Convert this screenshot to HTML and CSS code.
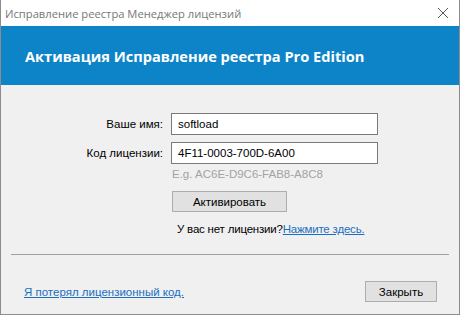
FILE: index.html
```html
<!doctype html>
<html lang="ru">
  <head>
    <meta charset="UTF-8" />
    <title>Исправление реестра Менеджер лицензий</title>
    <link rel="stylesheet" href="styles.css">
  </head>
  <body>
    <div class="window">
      <div class="titlebar">
        <span class="title">Исправление реестра Менеджер лицензий</span>
        <svg class="close" width="12" height="12" viewBox="0 0 12 12">
          <path d="M1 1 L11 11 M11 1 L1 11" stroke="#555" stroke-width="1" fill="none" />
        </svg>
      </div>
      <div class="banner">Активация Исправление реестра Pro Edition</div>
      <div class="content">
        <div class="form">
          <label class="label">Ваше имя:</label>
          <div class="input">softload</div>
          <label class="label">Код лицензии:</label>
          <div class="input">4F11-0003-700D-6A00</div>
          <div class="hint">E.g. AC6E-D9C6-FAB8-A8C8</div>
          <div class="actions">
            <button class="btn btn-activate">Активировать</button>
            <div class="nolicense">У вас нет лицензии?<a href="#">Нажмите здесь.</a></div>
          </div>
        </div>
        <div class="separator"></div>
        <div class="footer">
          <a href="#">Я потерял лицензионный код.</a>
          <button class="btn btn-close">Закрыть</button>
        </div>
      </div>
    </div>
  </body>
</html>
```
FILE: styles.css
```css
body {
  margin: 0;
  font-family: "Liberation Sans", Arial, sans-serif;
  font-size: 11.5px;
  color: #000;
}
.window {
  width: 460px;
  height: 315px;
  box-sizing: border-box;
  border: 1px solid #8c8c8c;
  border-top: none;
  background-color: #f0f0f0;
  display: flex;
  flex-direction: column;
}
.titlebar {
  height: 26px;
  background-color: #fff;
  display: flex;
  align-items: center;
  justify-content: space-between;
  padding: 0 10px 0 4px;
}
.title {
  font-family: "Open Sans", sans-serif;
  font-size: 11.2px;
  color: #777;
}
.banner {
  height: 59px;
  background-color: #0d84c8;
  color: #fff;
  font-family: "Open Sans", sans-serif;
  font-weight: bold;
  font-size: 14.6px;
  display: flex;
  align-items: center;
  padding-left: 24px;
}
.content {
  flex: 1;
  display: flex;
  flex-direction: column;
}
.form {
  display: grid;
  grid-template-columns: 162px 207px;
  column-gap: 8px;
  row-gap: 7px;
  align-items: center;
  padding-top: 28px;
}
.label {
  text-align: right;
}
.input {
  height: 22px;
  box-sizing: border-box;
  border: 1px solid #7a7a7a;
  background-color: #fff;
  padding: 0 6px;
  display: flex;
  align-items: center;
}
.hint {
  grid-column: 2;
  color: #a3a3a3;
  margin-top: -3px;
  padding-left: 1px;
}
.actions {
  grid-column: 2;
  display: flex;
  flex-direction: column;
  align-items: flex-start;
  gap: 11px;
  padding-left: 1px;
  margin-top: 4px;
}
.btn {
  font-family: "Liberation Sans", Arial, sans-serif;
  font-size: 11.5px;
  background-color: #e1e1e1;
  border: 1px solid #adadad;
  height: 21px;
  padding: 0;
  color: #000;
}
.btn-activate {
  width: 115px;
}
.nolicense {
  padding-left: 5px;
  white-space: nowrap;
  letter-spacing: -0.2px;
}
a {
  color: #1a6fc0;
  text-decoration: underline;
}
.separator {
  margin: 19px 10px 0 10px;
  border-top: 1px solid #a0a0a0;
}
.footer {
  display: flex;
  align-items: center;
  justify-content: space-between;
  padding: 26px 22px 0 23px;
}
.btn-close {
  width: 72px;
}
```
